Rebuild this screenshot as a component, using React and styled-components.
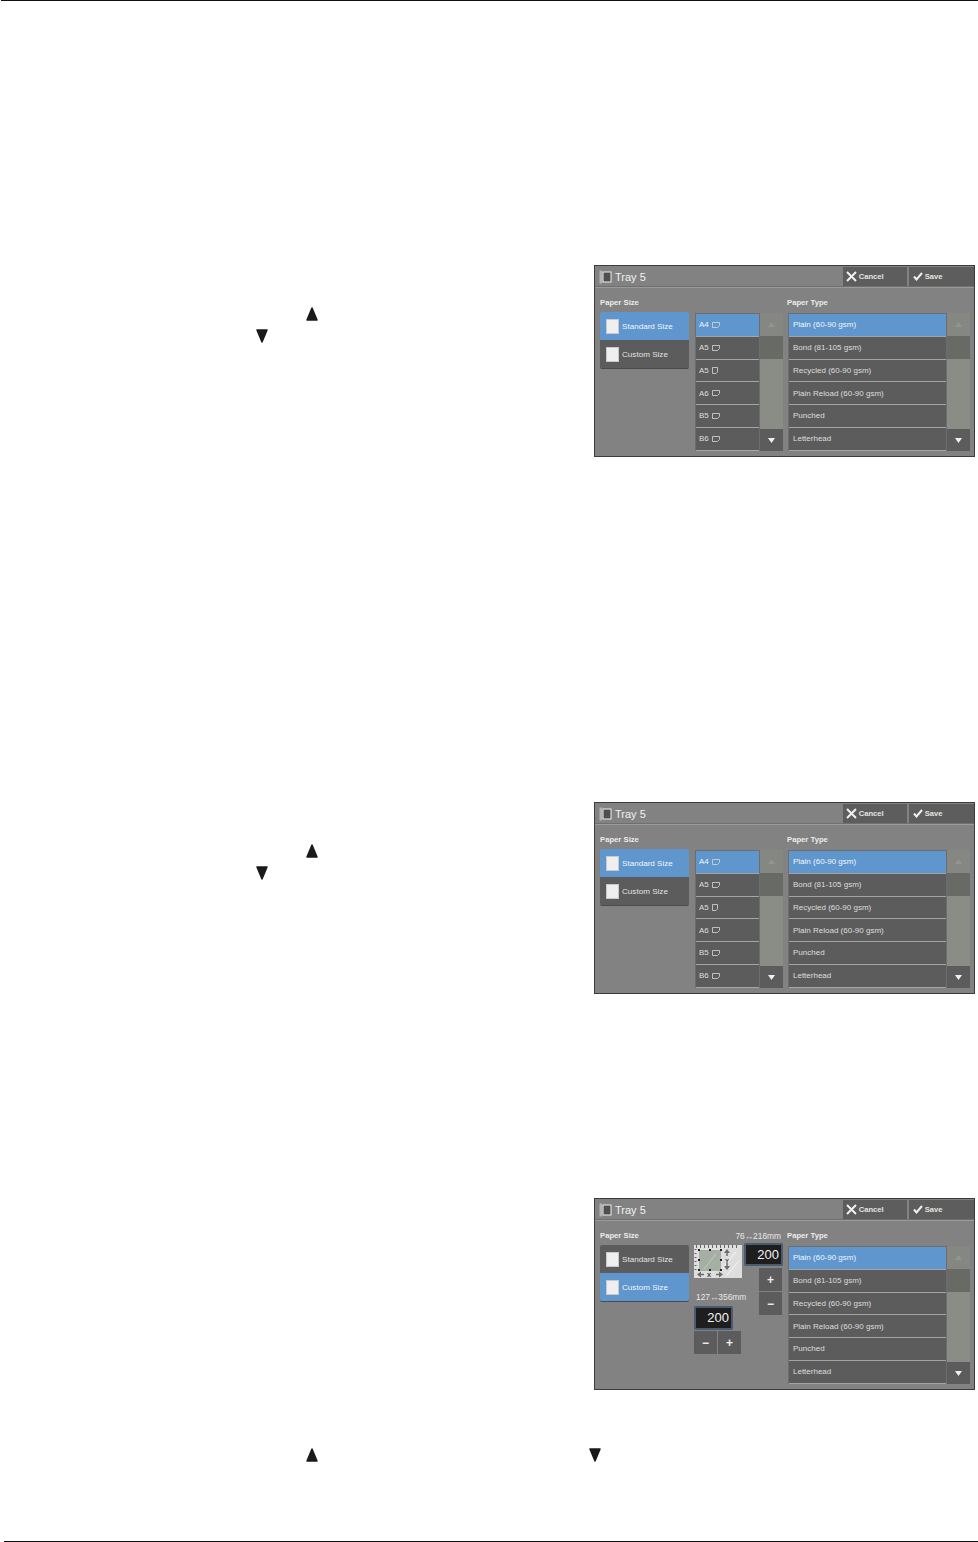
import React from "react";
import styled, { createGlobalStyle } from "styled-components";

const GlobalStyle = createGlobalStyle`
  html, body {
    margin: 0;
    padding: 0;
    background: #fff;
    font-family: "Liberation Sans", Arial, sans-serif;
  }
`;

const Page = styled.div`
  width: 978px;
  height: 1542px;
  display: flex;
  flex-direction: column;
  overflow: hidden;
`;

const HeaderRule = styled.div`
  height: 1px;
  margin-left: 1px;
  background: #111;
`;

const FooterRule = styled.div`
  height: 1px;
  margin-top: auto;
  margin-left: 4px;
  background: #111;
`;

const Section = styled.section`
  display: flex;
  margin-top: ${(p) => p.$top}px;
`;

const NoteCol = styled.div`
  width: 594px;
  padding-top: 41px;
`;

const NoteLine = styled.div`
  height: 22px;
  padding-left: ${(p) => p.$indent}px;
`;

const ArrowRow = styled.div`
  display: flex;
  padding-left: 305px;
  gap: 269px;
  margin-top: ${(p) => p.$top}px;
`;

const Panel = styled.div`
  width: 381px;
  height: 192px;
  box-sizing: border-box;
  border: 1px solid #3c3c3c;
  background: #828282;
  color: #f0f0f0;
`;

const TitleBar = styled.div`
  height: 21px;
  display: flex;
  align-items: center;
  padding-left: 4px;
  border-bottom: 1px solid #9a9a9a;
  box-shadow: 0 -1px 0 #6f6f6f inset;
`;

const Title = styled.span`
  margin-left: 3px;
  font-size: 11px;
  color: #f2f2f2;
`;

const HeadButton = styled.div`
  width: ${(p) => p.$w}px;
  height: 19px;
  margin-left: ${(p) => p.$left}px;
  background: #5d5d5d;
  display: flex;
  align-items: center;
  padding-left: ${(p) => p.$pad}px;
  box-sizing: border-box;
  gap: 2px;
  font-size: 7.6px;
  font-weight: bold;
  color: #e4e4e4;
`;

const Body = styled.div`
  display: flex;
  padding: 10px 0 0 5px;
`;

const Column = styled.div`
  width: ${(p) => p.$w}px;
  margin-left: ${(p) => p.$left || 0}px;
`;

const Label = styled.div`
  height: 10px;
  line-height: 10px;
  margin-left: ${(p) => p.$left || 0}px;
  font-size: 7.7px;
  font-weight: bold;
  color: #ececec;
`;

const SizeButtons = styled.div`
  margin-top: 4px;
  border-radius: 2px;
  overflow: hidden;
  box-shadow: 0 1px 0 #4a4a4a;
`;

const SizeButton = styled.div`
  height: 28px;
  display: flex;
  align-items: center;
  padding-left: 6px;
  gap: 3px;
  font-size: 8.1px;
  color: ${(p) => (p.$active ? "#f2f6fb" : "#e2e2e2")};
  background: ${(p) => (p.$active ? "#5f96cd" : "#5c5c5c")};
`;

const PaperSwatch = styled.span`
  width: 11px;
  height: 13px;
  background: #efefef;
  border: 1px solid #c9c9c9;
`;

const ListBox = styled.div`
  display: flex;
  margin-top: 5px;
  height: 138px;
  background: #6d6d6d;
`;

const Items = styled.div`
  flex: 1;
  display: flex;
  flex-direction: column;
  padding: 1px 1px 0 1px;
`;

const Item = styled.div`
  height: 21.75px;
  margin-bottom: 1px;
  padding-left: ${(p) => p.$pad}px;
  display: flex;
  align-items: center;
  gap: 3px;
  font-size: 8px;
  color: ${(p) => (p.$active ? "#f2f6fb" : "#dedede")};
  background: ${(p) => (p.$active ? "#5f96cd" : "#5c5c5c")};
  box-shadow: 0 1px 0 #a5a5a5;
`;

const ScrollBar = styled.div`
  width: 23px;
  display: flex;
  flex-direction: column;
  background: #8a8c86;
`;

const ScrollUp = styled.div`
  height: 23px;
  display: flex;
  align-items: center;
  justify-content: center;
  background: #858782;
`;

const ScrollThumb = styled.div`
  height: 23px;
  background: #676a65;
`;

const ScrollDown = styled.div`
  height: 22px;
  margin-top: auto;
  display: flex;
  align-items: center;
  justify-content: center;
  background: #5c5c5c;
`;

const DimLabel = styled.div`
  height: 10px;
  line-height: 10px;
  margin-top: ${(p) => p.$top || 0}px;
  margin-right: ${(p) => p.$right || 0}px;
  padding-left: ${(p) => p.$pad || 0}px;
  font-size: 8.4px;
  color: #e8e8e8;
  white-space: nowrap;
  text-align: ${(p) => p.$align || "left"};
`;

const DimRow = styled.div`
  display: flex;
  justify-content: space-between;
  margin-top: 2px;
`;

const DimLeft = styled.div`
  width: 48px;
  padding-top: 2px;
`;

const DimRight = styled.div`
  display: flex;
  flex-direction: column;
  align-items: flex-end;
  margin-left: -2px;
`;

const ValueBox = styled.div`
  width: 39px;
  height: ${(p) => p.$h}px;
  margin-top: ${(p) => p.$top || 0}px;
  box-sizing: border-box;
  border: 2px solid #4a5a70;
  border-radius: 2px;
  background: #1e1e1e;
  color: #f2f2f2;
  font-size: 13px;
  line-height: ${(p) => p.$h - 4}px;
  text-align: right;
  padding-right: 2px;
`;

const StepStack = styled.div`
  margin-top: ${(p) => p.$top}px;
  margin-right: ${(p) => p.$right || 0}px;
  display: flex;
  flex-direction: ${(p) => p.$dir};
  gap: 1px;
`;

const StepButton = styled.div`
  width: 23px;
  height: 23px;
  background: #5c5c5c;
  color: #eee;
  font-size: 12px;
  font-weight: bold;
  display: flex;
  align-items: center;
  justify-content: center;
`;

const ArrowSvg = styled.svg`
  display: block;
`;

const TrayIcon = () => (
  <svg width="13" height="14" viewBox="0 0 13 14">
    <rect x="0.5" y="0.5" width="2.5" height="13" fill="#b4b4b4" />
    <rect x="3.5" y="1.5" width="9" height="11" fill="#efefef" />
    <rect x="4.5" y="2.5" width="7" height="9" fill="#4f4f4f" />
  </svg>
);

const CancelIcon = () => (
  <svg width="11" height="11" viewBox="0 0 11 11">
    <path d="M1 1l9 9M10 1l-9 9" stroke="#f0f0f0" strokeWidth="2" />
  </svg>
);

const CheckIcon = () => (
  <svg width="10" height="9" viewBox="0 0 10 9">
    <path d="M1 4.5l2.5 3L9 1" stroke="#f0f0f0" strokeWidth="2" fill="none" />
  </svg>
);

const OrientIcon = ({ portrait }) =>
  portrait ? (
    <svg width="6" height="7" viewBox="0 0 6 7">
      <path d="M.5.5h5v4.5l-1.5 1.5h-3.5z" fill="none" stroke="#d8d8d8" strokeWidth=".8" />
    </svg>
  ) : (
    <svg width="8" height="6" viewBox="0 0 8 6">
      <path d="M.5.5h7v3l-2 2h-5z" fill="none" stroke="#d8d8d8" strokeWidth=".8" />
    </svg>
  );

const Caret = ({ up, color }) => (
  <svg width="7" height="5" viewBox="0 0 7 5">
    <path d={up ? "M3.5 0l3.5 5H0z" : "M0 0h7L3.5 5z"} fill={color} />
  </svg>
);

const BlackArrow = ({ up }) => (
  <ArrowSvg width="14" height="16" viewBox="0 0 14 16">
    <path
      d={up ? "M7 2l5 12H2z" : "M2 2h10L7 14z"}
      fill="#1a1a1a"
      stroke="#1a1a1a"
      strokeWidth="1.5"
      strokeLinejoin="round"
    />
  </ArrowSvg>
);

const SizeDiagram = () => (
  <svg width="48" height="33" viewBox="0 0 48 33" style={{ display: "block" }}>
    <rect width="48" height="33" fill="#dedede" />
    <path d="M2 1.5h44" stroke="#666" strokeDasharray="1 3" strokeWidth="3" />
    <path d="M1.5 4v24" stroke="#666" strokeDasharray="1 3" strokeWidth="2" />
    <rect x="5" y="5" width="22" height="21" fill="#a6afa3" />
    <path d="M28 24l14-17M33 30l12-14" stroke="#f7f7f7" />
    <path d="M10 24l12-15" stroke="#c2c9c0" />
    <path d="M33 4l-3 4h6zM33 25l-3-4h6z" fill="#6c6c6c" />
    <path d="M33 8v3M33 18v3" stroke="#6c6c6c" strokeWidth="1.5" />
    <text x="31" y="17.5" fontSize="6" fontWeight="bold" fill="#333">Y</text>
    <path d="M3 29.5l4-3v6zM29 29.5l-4-3v6z" fill="#6c6c6c" />
    <path d="M7 29.5h3M22 29.5h3" stroke="#6c6c6c" strokeWidth="1.5" />
    <text x="13" y="32" fontSize="6" fontWeight="bold" fill="#333">X</text>
    <g fill="#222">
      <rect x="4" y="4" width="2" height="2" />
      <rect x="15" y="4" width="2" height="2" />
      <rect x="26" y="4" width="2" height="2" />
      <rect x="4" y="14" width="2" height="2" />
      <rect x="26" y="14" width="2" height="2" />
      <rect x="4" y="24" width="2" height="2" />
      <rect x="15" y="24" width="2" height="2" />
      <rect x="26" y="24" width="2" height="2" />
    </g>
  </svg>
);

const trays = [
  { name: "A4" },
  { name: "A5" },
  { name: "A5", portrait: true },
  { name: "A6" },
  { name: "B5" },
  { name: "B6" },
];

const paperTypes = [
  "Plain (60-90 gsm)",
  "Bond (81-105 gsm)",
  "Recycled (60-90 gsm)",
  "Plain Reload (60-90 gsm)",
  "Punched",
  "Letterhead",
];

function Scroller() {
  return (
    <ScrollBar>
      <ScrollUp>
        <Caret up color="#92948f" />
      </ScrollUp>
      <ScrollThumb />
      <ScrollDown>
        <Caret color="#f0f0f0" />
      </ScrollDown>
    </ScrollBar>
  );
}

function CustomSizeFields() {
  return (
    <Column $w={89} $left={5}>
      <DimLabel $align="right" $right={2}>
        76↔216mm
      </DimLabel>
      <DimRow>
        <DimLeft>
          <SizeDiagram />
          <DimLabel $pad={2} $top={14}>
            127↔356mm
          </DimLabel>
          <ValueBox $h={24} $top={4}>
            200
          </ValueBox>
          <StepStack $dir="row" $top={1}>
            <StepButton>−</StepButton>
            <StepButton>+</StepButton>
          </StepStack>
        </DimLeft>
        <DimRight>
          <ValueBox $h={23}>200</ValueBox>
          <StepStack $dir="column" $top={2} $right={1}>
            <StepButton>+</StepButton>
            <StepButton>−</StepButton>
          </StepStack>
        </DimRight>
      </DimRow>
    </Column>
  );
}

function TrayPanel({ custom }) {
  return (
    <Panel>
      <TitleBar>
        <TrayIcon />
        <Title>Tray 5</Title>
        <HeadButton $w={64} $left={197} $pad={3}>
          <CancelIcon />
          Cancel
        </HeadButton>
        <HeadButton $w={65} $left={2} $pad={4}>
          <CheckIcon />
          Save
        </HeadButton>
      </TitleBar>
      <Body>
        <Column $w={89}>
          <Label>Paper Size</Label>
          <SizeButtons>
            <SizeButton $active={!custom}>
              <PaperSwatch />
              Standard Size
            </SizeButton>
            <SizeButton $active={custom}>
              <PaperSwatch />
              Custom Size
            </SizeButton>
          </SizeButtons>
        </Column>
        {custom ? (
          <CustomSizeFields />
        ) : (
          <Column $w={88} $left={6}>
            <Label />
            <ListBox>
              <Items>
                {trays.map((t, i) => (
                  <Item key={i} $active={i === 0} $pad={3}>
                    {t.name}
                    <OrientIcon portrait={t.portrait} />
                  </Item>
                ))}
              </Items>
              <Scroller />
            </ListBox>
          </Column>
        )}
        <Column $w={182} $left={5}>
          <Label $left={-1}>Paper Type</Label>
          <ListBox>
            <Items>
              {paperTypes.map((t, i) => (
                <Item key={t} $active={i === 0} $pad={4}>
                  {t}
                </Item>
              ))}
            </Items>
            <Scroller />
          </ListBox>
        </Column>
      </Body>
    </Panel>
  );
}

function ArrowNotes() {
  return (
    <NoteCol>
      <NoteLine $indent={305}>
        <BlackArrow up />
      </NoteLine>
      <NoteLine $indent={255}>
        <BlackArrow />
      </NoteLine>
    </NoteCol>
  );
}

export default function App() {
  return (
    <Page>
      <GlobalStyle />
      <HeaderRule />
      <Section $top={264}>
        <ArrowNotes />
        <TrayPanel />
      </Section>
      <Section $top={345}>
        <ArrowNotes />
        <TrayPanel />
      </Section>
      <Section $top={204}>
        <NoteCol />
        <TrayPanel custom />
      </Section>
      <ArrowRow $top={57}>
        <BlackArrow up />
        <BlackArrow />
      </ArrowRow>
      <FooterRule />
    </Page>
  );
}
